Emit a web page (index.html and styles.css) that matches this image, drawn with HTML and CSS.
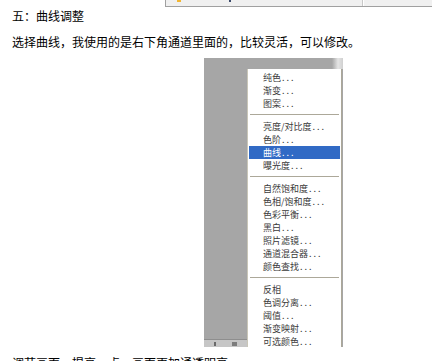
FILE: index.html
```html
<!DOCTYPE html>
<html lang="zh-CN">
<head>
    <meta charset="UTF-8">
    <title>曲线调整</title>
    <link rel="stylesheet" href="styles.css">
</head>
<body>

<div class="prev-shot">
    <div class="prev-cell">
        <span class="dot dot-yellow"></span>
        <span class="dot dot-dark"></span>
    </div>
    <div class="prev-cell"></div>
</div>

<div class="article">
    <h3 class="step-title">五：曲线调整</h3>
    <p class="step-text">选择曲线，我使用的是右下角通道里面的，比较灵活，可以修改。</p>

    <div class="shot">
        <div class="shot-top"></div>
        <div class="shot-body">
            <div class="shot-side">
                <div class="side-tools">
                    <span class="tool tool-a"></span>
                    <span class="tool tool-b"></span>
                </div>
            </div>
            <ul class="menu">
                <li>纯色<span class="dots">...</span></li>
                <li>渐变<span class="dots">...</span></li>
                <li>图案<span class="dots">...</span></li>
                <li class="sep"></li>
                <li>亮度/对比度<span class="dots">...</span></li>
                <li>色阶<span class="dots">...</span></li>
                <li class="active">曲线<span class="dots">...</span></li>
                <li>曝光度<span class="dots">...</span></li>
                <li class="sep"></li>
                <li>自然饱和度<span class="dots">...</span></li>
                <li>色相/饱和度<span class="dots">...</span></li>
                <li>色彩平衡<span class="dots">...</span></li>
                <li>黑白<span class="dots">...</span></li>
                <li>照片滤镜<span class="dots">...</span></li>
                <li>通道混合器<span class="dots">...</span></li>
                <li>颜色查找<span class="dots">...</span></li>
                <li class="sep"></li>
                <li>反相</li>
                <li>色调分离<span class="dots">...</span></li>
                <li>阈值<span class="dots">...</span></li>
                <li>渐变映射<span class="dots">...</span></li>
                <li>可选颜色<span class="dots">...</span></li>
            </ul>
        </div>
    </div>

    <p class="step-text">调节画面，提亮一点，画面更加通透明亮。</p>
</div>

</body>
</html>
```

FILE: styles.css
```css
body {
    margin: 0;
    background: #fff;
    color: #000;
    font-family: "Noto Sans CJK SC", "Liberation Sans", sans-serif;
    font-size: 12px;
    overflow: hidden;
}
.prev-shot {
    margin-left: 165px;
    height: 6px;
    display: flex;
    background: #f0f0f0;
    border-left: 1px solid #a0a0a0;
    border-bottom: 1px solid #a0a0a0;
}
.prev-cell {
    position: relative;
    width: 196px;
    border-right: 1px solid #c8c8c8;
}
.prev-cell + .prev-cell {
    flex: 1;
    border-left: 1px solid #fff;
    border-right: none;
}
.dot {
    position: absolute;
    top: 0;
    height: 2px;
}
.dot-yellow {
    left: 11px;
    width: 4px;
    background: #f2b632;
}
.dot-dark {
    left: 63px;
    width: 2px;
    background: #3c4a6a;
}
.article {
    padding-left: 12px;
}
.step-title {
    margin: 0;
    font-size: 12px;
    font-weight: normal;
    line-height: 18px;
}
.step-text {
    margin: 8px 0 0;
    line-height: 18px;
}
.shot {
    margin: 7px 0 0 192px;
    width: 139px;
    height: 289px;
    overflow: hidden;
    background: #a6a6a6;
    display: flex;
    flex-direction: column;
}
.shot + .step-text {
    margin-top: 7px;
}
.shot-top {
    height: 11px;
    flex-shrink: 0;
    background: linear-gradient(to right, #a6a6a6 0, #a6a6a6 128px, #e4e4e4 134px, #d0d0d0 139px);
}
.shot-body {
    flex: 1;
    display: flex;
    min-height: 0;
}
.shot-side {
    width: 43px;
    display: flex;
    flex-direction: column;
    justify-content: flex-end;
}
.side-tools {
    height: 7px;
    border-top: 1px solid #8e8e8e;
    background: #c6c6c6;
    position: relative;
}
.tool {
    position: absolute;
    top: 2px;
    height: 4px;
    background: #6a6a6a;
}
.tool-a {
    left: 10px;
    width: 2px;
}
.tool-b {
    left: 28px;
    width: 5px;
    background: #7c7c7c;
}
.menu {
    list-style: none;
    margin: 0;
    padding: 2px 0 0;
    width: 93px;
    background: #fff;
    border-left: 1px solid #c9c6b8;
    border-right: 1px solid #aca899;
}
.menu li {
    height: 13px;
    line-height: 13px;
    padding-left: 14px;
    margin: 0 1px;
    font-size: 9px;
    color: #3a3a3a;
    white-space: nowrap;
}
.menu .dots {
    letter-spacing: 2px;
    margin-left: 1px;
}
.menu li.active {
    background: #316ac5;
    color: #fff;
}
.menu li.sep {
    height: 0;
    padding: 0;
    margin: 4px 2px 5px;
    border-top: 1px solid #aca899;
}
```
